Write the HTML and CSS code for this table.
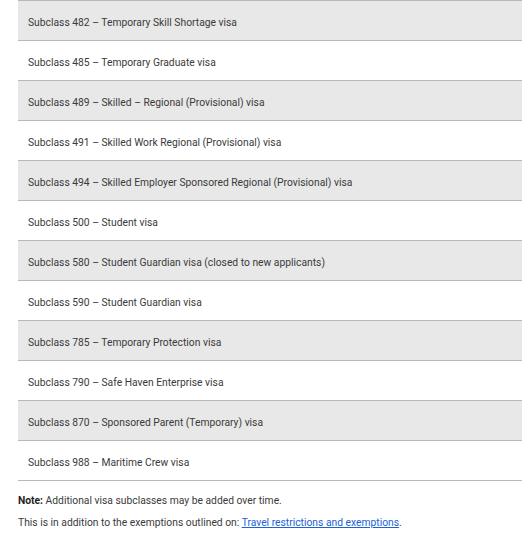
FILE: index.html
```html
<!DOCTYPE html>
<html>
<head>
<meta charset="utf-8">
<link rel="stylesheet" href="styles.css">
</head>
<body>
<div class="page">
  <table class="visa-table">
    <tbody>
      <tr class="alt"><td>Subclass 482 – Temporary Skill Shortage visa</td></tr>
      <tr><td>Subclass 485 – Temporary Graduate visa</td></tr>
      <tr class="alt"><td>Subclass 489 – Skilled – Regional (Provisional) visa</td></tr>
      <tr><td>Subclass 491 – Skilled Work Regional (Provisional) visa</td></tr>
      <tr class="alt"><td>Subclass 494 – Skilled Employer Sponsored Regional (Provisional) visa</td></tr>
      <tr><td>Subclass 500 – Student visa</td></tr>
      <tr class="alt"><td>Subclass 580 – Student Guardian visa (closed to new applicants)</td></tr>
      <tr><td>Subclass 590 – Student Guardian visa</td></tr>
      <tr class="alt"><td>Subclass 785 – Temporary Protection visa</td></tr>
      <tr><td>Subclass 790 – Safe Haven Enterprise visa</td></tr>
      <tr class="alt"><td>Subclass 870 – Sponsored Parent (Temporary) visa</td></tr>
      <tr><td>Subclass 988 – Maritime Crew visa</td></tr>
    </tbody>
  </table>
  <p class="note"><strong>Note:</strong> Additional visa subclasses may be added over time.</p>
  <p class="note">This is in addition to the exemptions outlined on: <a href="#">Travel restrictions and exemptions</a>.</p>
</div>
</body>
</html>
```
FILE: styles.css
```css
html, body {
  margin: 0;
  padding: 0;
  background: #ffffff;
}
.page {
  padding-left: 18px;
  width: 504px;
  font-family: Roboto, "Liberation Sans", sans-serif;
  font-size: 10.3px;
  color: #3a3a3a;
}
.visa-table {
  width: 504px;
  border-collapse: collapse;
  border-top: 1px solid #b8b8b8;
}
.visa-table td {
  height: 40px;
  padding: 5px 0 0 10px;
  border-bottom: 1px solid #b8b8b8;
  box-sizing: border-box;
  vertical-align: middle;
  line-height: 14px;
}
.visa-table tr.alt td {
  background: #e8e8e8;
}
.note {
  margin: 0;
  line-height: 14px;
}
.note:first-of-type {
  margin-top: 13px;
}
.note + .note {
  margin-top: 8px;
}
.note strong {
  font-weight: 700;
  color: #222;
}
.note a {
  color: #1a62d6;
  text-decoration: underline;
}
```
